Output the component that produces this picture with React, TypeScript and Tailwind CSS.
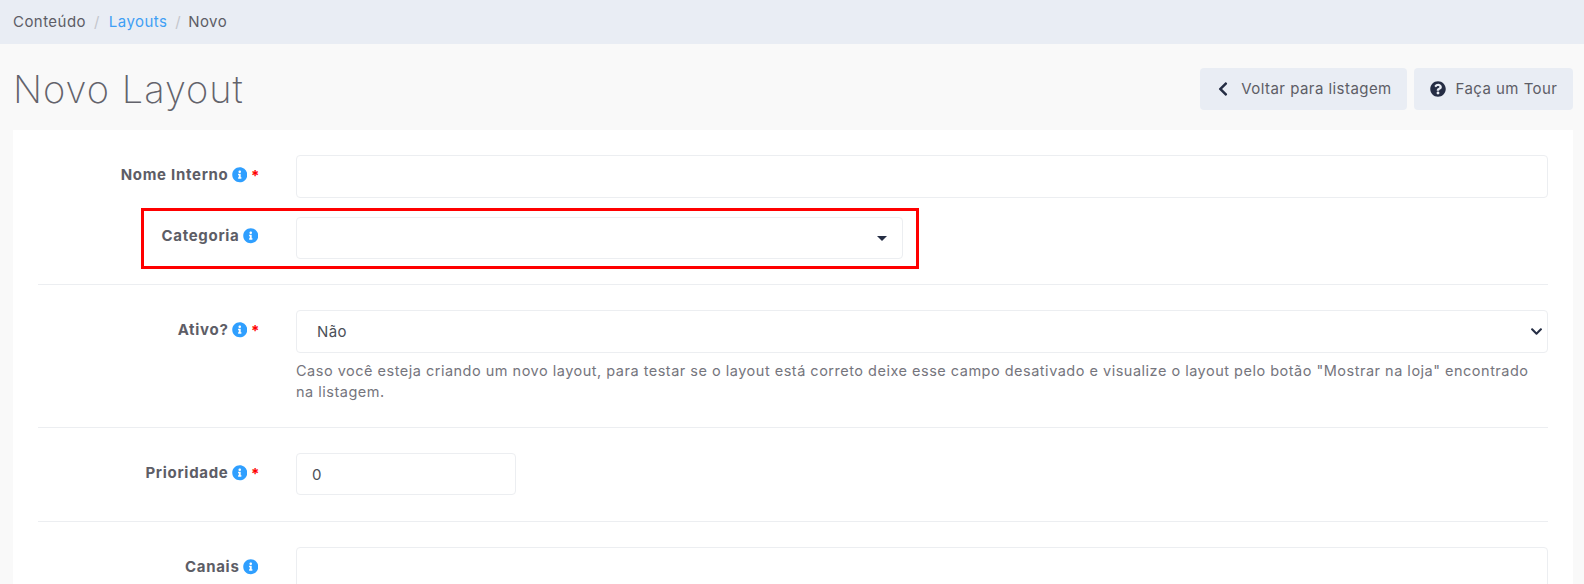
import { FaChevronDown, FaChevronLeft, FaInfoCircle, FaQuestionCircle } from 'react-icons/fa';

const inputClass = 'h-[43px] rounded border border-[#eceef1] bg-white px-5 text-[15px] tracking-[0.4px] text-[#4b4f58] outline-none';

function Label({ text, required }: { text: string; required?: boolean }) {
  return (
    <div className={`flex h-[43px] w-[220px] shrink-0 items-center justify-end pb-[3px] text-[15px] font-bold tracking-[0.7px] text-[#5d5d66] ${required ? 'pr-px' : ''}`}>
      <span>{text}</span>
      <FaInfoCircle className="ml-[3px] text-[15.5px] text-[#2f9fff]" />
      {required && <span className="ml-1 w-[6px] text-[15px] leading-none text-[#f00]">*</span>}
    </div>
  );
}

function Divider() {
  return <hr className="my-[25px] border-0 border-t border-[#eceef1]" />;
}

export default function App() {
  return (
    <div className="h-[584px] overflow-hidden bg-[#f9f9f9] font-['Inter',sans-serif] tracking-[0.45px] text-[#5d5d66]">
      <nav className="flex h-[44px] items-center bg-[#e9edf4] px-[13px] text-[15px]">
        <span>Conteúdo</span>
        <span className="ml-2 text-[#c4c6cc]">/</span>
        <span className="ml-[9px] text-[#3f9ff5]">Layouts</span>
        <span className="ml-[8px] text-[#c4c6cc]">/</span>
        <span className="ml-[7px]">Novo</span>
      </nav>

      <header className="flex h-[86px] items-start justify-between pl-[13px] pr-[11px]">
        <h1 className="mt-[22px] text-[38px] font-extralight leading-[46px] tracking-[1px] text-[#63636b]">Novo Layout</h1>
        <div className="mt-6 flex gap-[7px]">
          <button type="button" className="flex h-[42px] w-[207px] items-center justify-center gap-[10px] rounded bg-[#e9edf4] text-[15px]">
            <FaChevronLeft className="text-[16px] text-[#252d44]" />
            Voltar para listagem
          </button>
          <button type="button" className="flex h-[42px] w-[159px] items-center justify-center gap-[10px] rounded bg-[#e9edf4] text-[15px]">
            <FaQuestionCircle className="text-[16px] text-[#252d44]" />
            Faça um Tour
          </button>
        </div>
      </header>

      <main className="ml-[13px] mr-[11px] h-[454px] bg-white px-[25px] pt-[25px]">
        <div className="flex gap-[38px]">
          <Label text="Nome Interno" required />
          <input className={`${inputClass} min-w-0 flex-1`} />
        </div>

        <div className="relative mt-[19px] flex gap-[38px]">
          <div className="pointer-events-none absolute left-[103px] top-[-9px] h-[61px] w-[778px] border-[3px] border-[#f00]" />
          <div className="-mt-px h-[43px]">
            <Label text="Categoria" />
          </div>
          <div className="flex h-[42px] w-[607px] items-center justify-end rounded border border-[#eceef1] bg-white pr-[15px]">
            <span className="h-0 w-0 border-x-[5px] border-t-[5px] border-x-transparent border-t-[#252d44]" />
          </div>
        </div>

        <Divider />

        <div className="flex gap-[38px]">
          <Label text="Ativo?" required />
          <div className="min-w-0 flex-1">
            <div className="relative">
              <select className={`${inputClass} w-full appearance-none pt-px`} defaultValue="nao">
                <option value="nao">Não</option>
                <option value="sim">Sim</option>
              </select>
              <FaChevronDown className="pointer-events-none absolute right-[5px] top-[15px] text-[13px] text-[#252d44]" />
            </div>
            <p className="mt-[7px] text-[14.5px] leading-[21px] tracking-[0.5px] text-[#75757d]">
              Caso você esteja criando um novo layout, para testar se o layout está correto deixe esse campo desativado e visualize o layout pelo botão "Mostrar na loja" encontrado na listagem.
            </p>
          </div>
        </div>

        <Divider />

        <div className="flex gap-[38px]">
          <Label text="Prioridade" required />
          <input className="h-[42px] w-[220px] rounded border border-[#eceef1] bg-white px-[15px] text-[15px] tracking-[0.4px] text-[#4b4f58] outline-none" defaultValue="0" />
        </div>

        <Divider />

        <div className="flex gap-[38px]">
          <Label text="Canais" />
          <input className={`${inputClass} min-w-0 flex-1`} />
        </div>
      </main>
    </div>
  );
}
